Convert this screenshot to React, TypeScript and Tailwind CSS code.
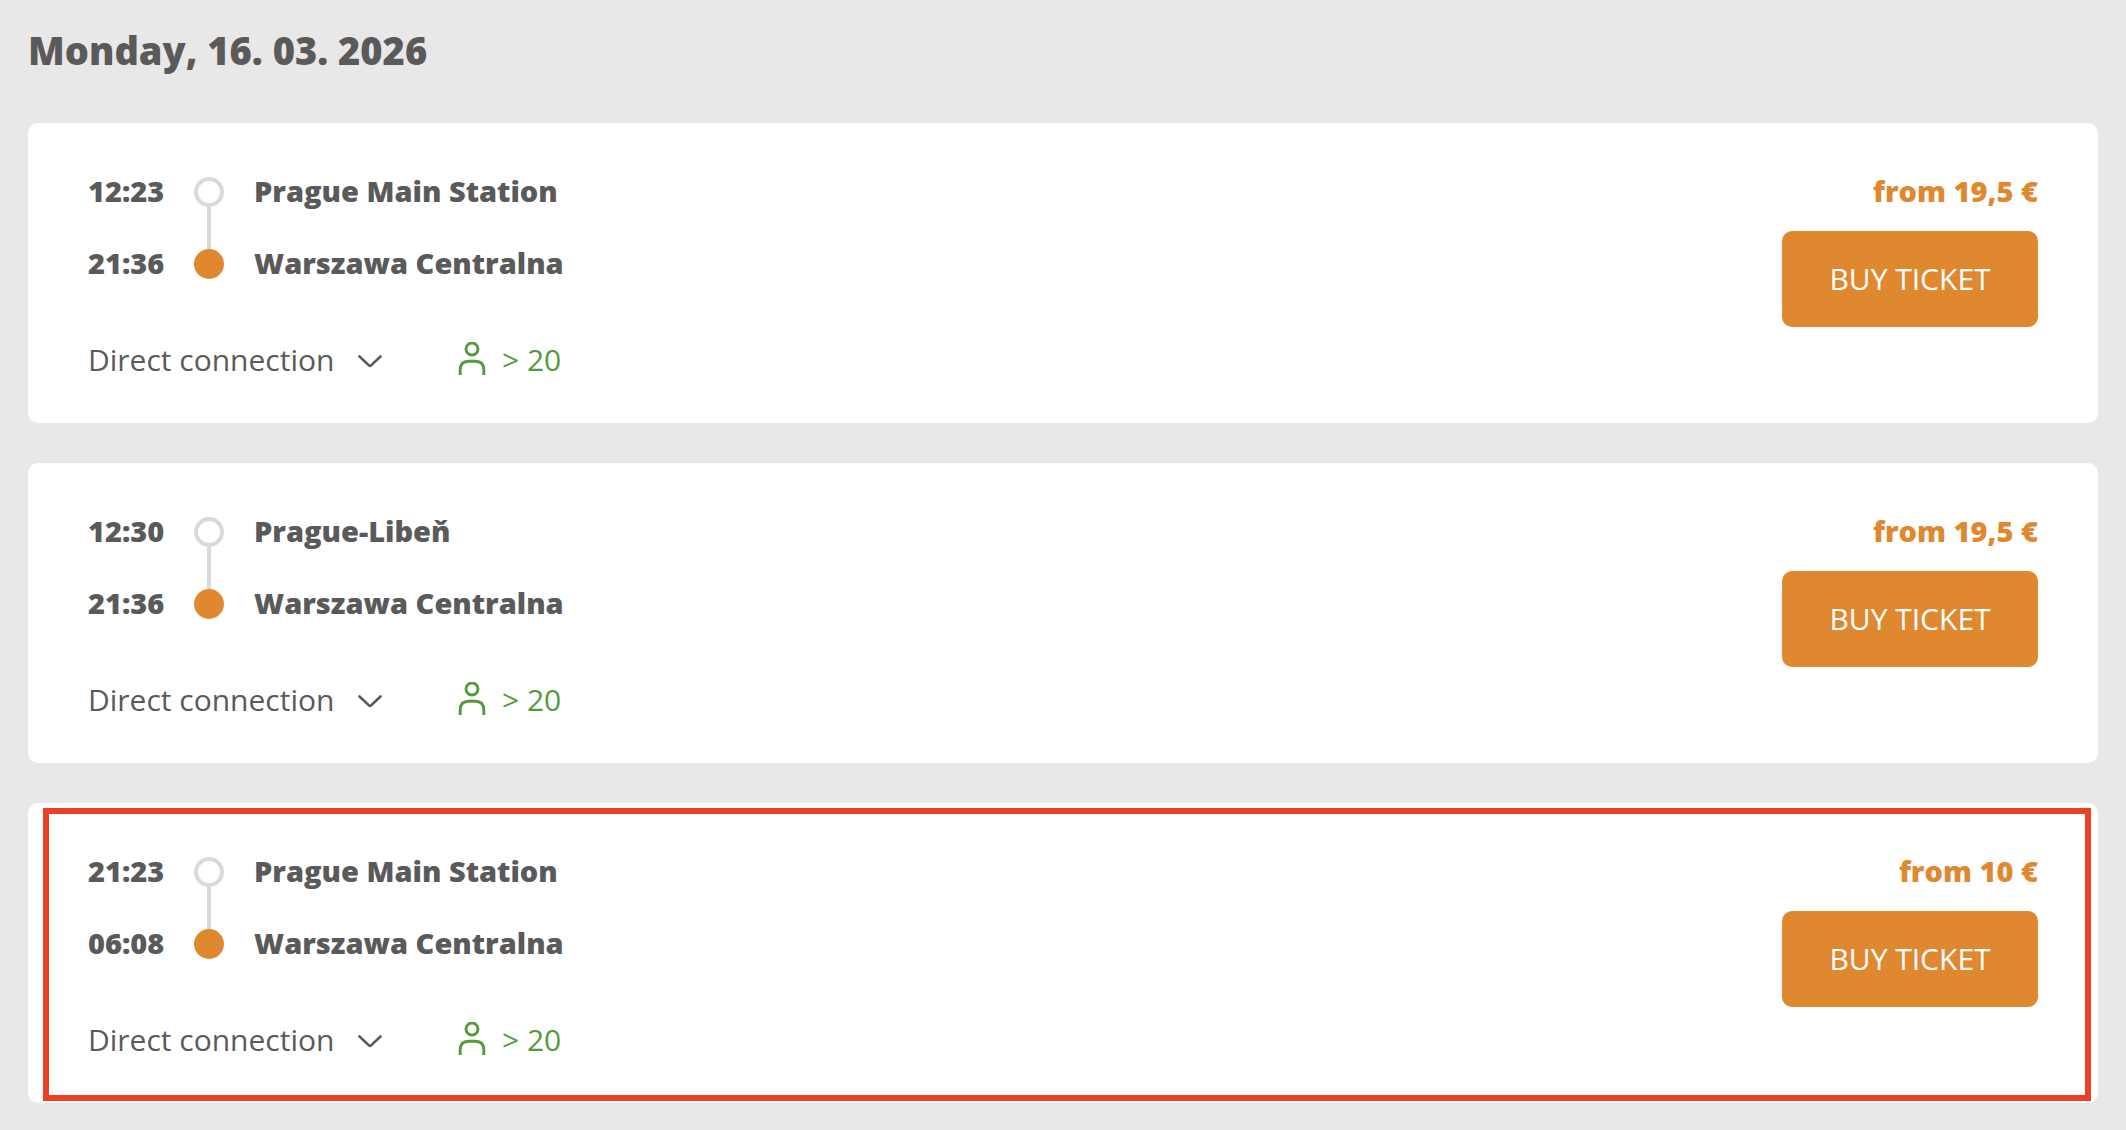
const connections = [
  { departure: '12:23', arrival: '21:36', from: 'Prague Main Station', to: 'Warszawa Centralna', price: 'from 19,5 €', seats: '> 20' },
  { departure: '12:30', arrival: '21:36', from: 'Prague-Libeň', to: 'Warszawa Centralna', price: 'from 19,5 €', seats: '> 20' },
  { departure: '21:23', arrival: '06:08', from: 'Prague Main Station', to: 'Warszawa Centralna', price: 'from 10 €', seats: '> 20', highlighted: true },
];

type Connection = (typeof connections)[number];

function ChevronIcon() {
  return (
    <svg width="24" height="16" viewBox="0 0 24 16" fill="none" stroke="currentColor" strokeWidth="2.6" strokeLinecap="round" strokeLinejoin="round" aria-hidden="true">
      <path d="M1.5 4.5 L11.2 13.6 Q12 14.3 12.8 13.6 L22.5 4.5" />
    </svg>
  );
}

function PersonIcon() {
  return (
    <svg width="28" height="36" viewBox="0 0 28 36" fill="none" stroke="currentColor" strokeWidth="2.9" aria-hidden="true">
      <circle cx="14" cy="7" r="6" />
      <path d="M2.2 33 V28 Q2.2 19.2 10.5 19.2 H17.5 Q25.8 19.2 25.8 28 V33" />
    </svg>
  );
}

function ConnectionCard({ connection }: { connection: Connection }) {
  return (
    <li className="relative flex items-start justify-between rounded-[10px] bg-white px-[60px] pt-[50px] pb-[45px]">
      <div>
        {/* Departure and arrival */}
        <div className="flex text-[29px] leading-9 font-extrabold">
          <div className="flex w-[106px] flex-col gap-9">
            <time>{connection.departure}</time>
            <time>{connection.arrival}</time>
          </div>
          <div className="flex flex-col items-center pt-1 pb-[2px]">
            <span className="size-[30px] rounded-full border-4 border-[#d9d9d9]" />
            <span className="w-1 grow bg-[#d9d9d9]" />
            <span className="size-[30px] rounded-full bg-[#e08830]" />
          </div>
          <div className="ml-[30px] flex flex-col gap-9">
            <span>{connection.from}</span>
            <span>{connection.to}</span>
          </div>
        </div>

        {/* Details toggle and free seats */}
        <div className="mt-[61px] flex items-center text-[30px] leading-9">
          <button type="button" className="flex w-[370px] items-center gap-6">
            Direct connection
            <ChevronIcon />
          </button>
          <span className="flex items-center gap-4 text-[#549a3c]">
            <PersonIcon />
            {connection.seats}
          </span>
        </div>
      </div>

      <div className="flex flex-col items-end gap-[22px]">
        <span className="text-[29px] leading-9 font-extrabold text-[#e08830]">{connection.price}</span>
        <button type="button" className="h-24 w-64 rounded-[10px] bg-[#e08830] text-[30px] leading-9 text-white">
          BUY TICKET
        </button>
      </div>

      {connection.highlighted && (
        <div className="pointer-events-none absolute top-[5px] right-[7px] bottom-[2px] left-[15px] border-6 border-[#eb4026]" />
      )}
    </li>
  );
}

export default function App() {
  return (
    <main className="min-h-screen bg-[#e8e8e8] px-7 pt-[26px] pb-7 font-['Open_Sans',sans-serif] text-[#5a5a5a]">
      <h1 className="text-[38px] leading-[48px] font-extrabold">Monday, 16. 03. 2026</h1>
      <ul className="mt-[49px] flex flex-col gap-10">
        {connections.map((connection) => (
          <ConnectionCard key={connection.departure} connection={connection} />
        ))}
      </ul>
    </main>
  );
}
